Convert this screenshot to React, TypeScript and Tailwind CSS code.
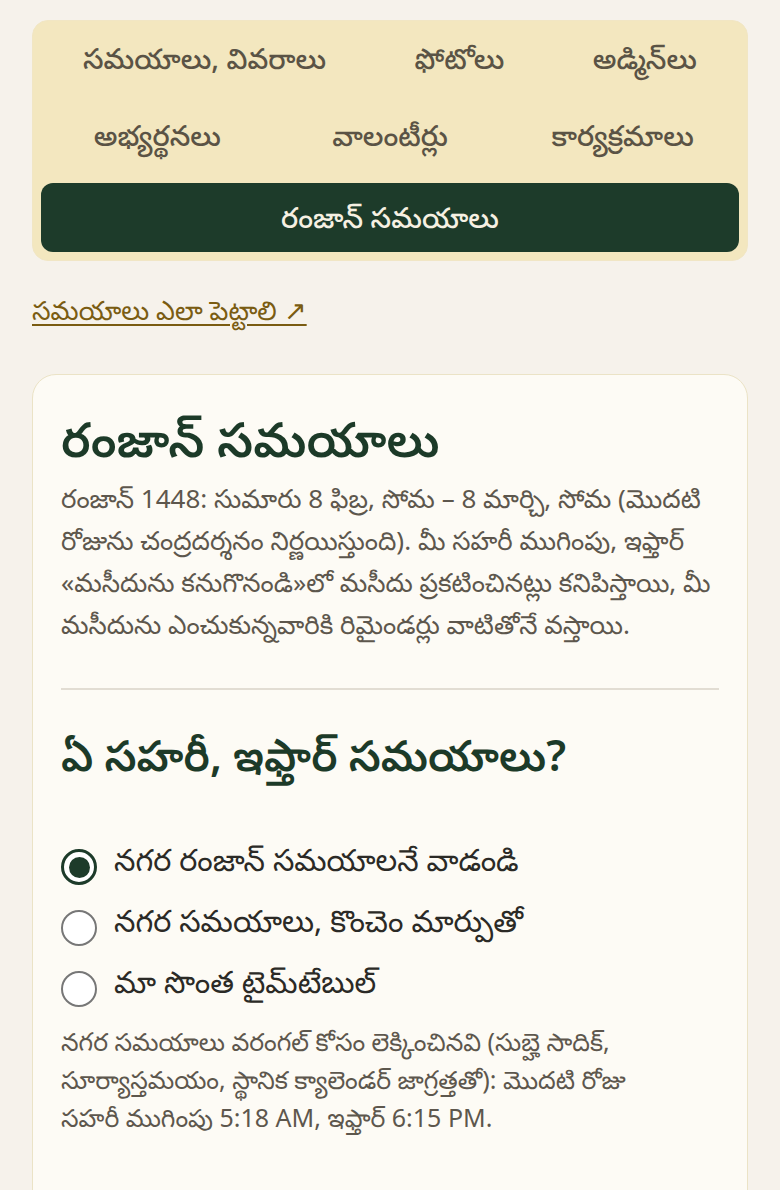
import { useState } from "react";

const tabs = [
  "సమయాలు, వివరాలు",
  "ఫోటోలు",
  "అడ్మిన్‌లు",
  "అభ్యర్థనలు",
  "వాలంటీర్లు",
  "కార్యక్రమాలు",
  "రంజాన్ సమయాలు",
];

const options = [
  "నగర రంజాన్ సమయాలనే వాడండి",
  "నగర సమయాలు, కొంచెం మార్పుతో",
  "మా సొంత టైమ్‌టేబుల్",
];

export default function App() {
  const [active, setActive] = useState(6);
  const [choice, setChoice] = useState(0);

  return (
    <div className="min-h-[1190px] bg-[#f6f2eb] px-8 pt-5 font-['Noto_Sans','Noto_Sans_Telugu',sans-serif]">
      {/* Tabs */}
      <nav className="flex flex-wrap gap-y-2 rounded-2xl border border-[#f1e6c4] bg-[#f3e7bf] p-2">
        {tabs.map((t, i) => (
          <button
            key={t}
            onClick={() => setActive(i)}
            className={
              i === active
                ? "flex-1 whitespace-nowrap rounded-xl bg-[#1d3b2a] px-[42px] py-4 text-[28.5px] leading-[37px] font-medium text-[#f6f0e2]"
                : "flex-1 whitespace-nowrap rounded-xl px-[42px] pt-[11px] pb-[21px] text-[28.5px] leading-[37px] font-medium text-[#5a5345]"
            }
          >
            {t}
          </button>
        ))}
      </nav>

      <p className="mt-[29px] leading-[40px]">
        <a
          href="#"
          className="text-[26.5px] text-[#7a5c12] underline decoration-[1.5px] underline-offset-[4px]"
        >
          సమయాలు ఎలా పెట్టాలి ↗
        </a>
      </p>

      {/* Card */}
      <section className="mt-10 rounded-[24px] border-[1.5px] border-[#ebe3c6] bg-[#fdfbf5] px-[28px] pt-[31px] pb-24">
        <h1 className="text-[48.5px] leading-[64px] font-semibold text-[#1c3a28]">
          రంజాన్ సమయాలు
        </h1>
        <p className="mt-[7px] text-[26px] leading-[42px] text-[#5d574d]">
          రంజాన్ 1448: సుమారు 8 ఫిబ్ర, సోమ – 8 మార్చి, సోమ (మొదటి రోజును
          చంద్రదర్శనం నిర్ణయిస్తుంది). మీ సహరీ ముగింపు, ఇఫ్తార్ «మసీదును
          కనుగొనండి»లో మసీదు ప్రకటించినట్లు కనిపిస్తాయి, మీ మసీదును
          ఎంచుకున్నవారికి రిమైండర్లు వాటితోనే వస్తాయి.
        </p>

        <hr className="mt-[43px] border-t-2 border-[#e2ddd3]" />

        <h2 className="mt-[35px] text-[43px] leading-[60px] font-semibold text-[#1c3a28]">
          ఏ సహరీ, ఇఫ్తార్ సమయాలు?
        </h2>

        <div className="mt-[44px] flex flex-col">
          {options.map((o, i) => (
            <label
              key={o}
              className="flex cursor-pointer items-start gap-[17px]"
              onClick={() => setChoice(i)}
            >
              <span
                className={
                  i === choice
                    ? "mt-[20px] flex h-9 w-9 shrink-0 items-center justify-center rounded-full border-[3px] border-[#1d3b2a] bg-white"
                    : "mt-[20px] flex h-9 w-9 shrink-0 items-center justify-center rounded-full border-2 border-[#777777] bg-white"
                }
              >
                {i === choice && <span className="h-[21px] w-[21px] rounded-full bg-[#1d3b2a]" />}
              </span>
              <span className="text-[30.5px] leading-[61px] text-[#2b2a26]">{o}</span>
            </label>
          ))}
        </div>

        <p className="mt-[10px] max-w-[615px] text-[25px] leading-[38px] text-[#5d574d]">
          నగర సమయాలు వరంగల్ కోసం లెక్కించినవి (సుబ్హె సాదిక్,
          సూర్యాస్తమయం, స్థానిక క్యాలెండర్ జాగ్రత్తతో): మొదటి రోజు సహరీ
          ముగింపు 5:18 AM, ఇఫ్తార్ 6:15 PM.
        </p>
      </section>
    </div>
  );
}
